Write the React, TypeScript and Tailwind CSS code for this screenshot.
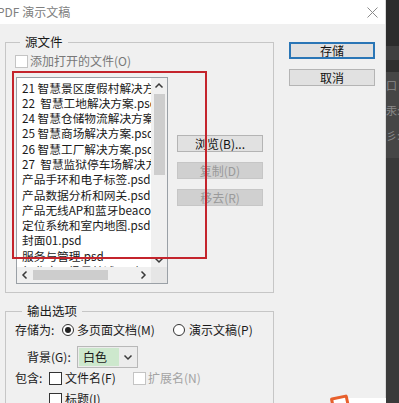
import React from "react";

// "PDF 演示文稿" dialog (Photoshop scripts) — source files list + output options.

const files = [
  "21 智慧景区度假村解决方案.psd",
  "22  智慧工地解决方案.psd",
  "24 智慧仓储物流解决方案.psd",
  "25 智慧商场解决方案.psd",
  "26 智慧工厂解决方案.psd",
  "27  智慧监狱停车场解决方案.psd",
  "产品手环和电子标签.psd",
  "产品数据分析和网关.psd",
  "产品无线AP和蓝牙beacon.psd",
  "定位系统和室内地图.psd",
  "封面01.psd",
  "服务与管理.psd",
  "行业应用场景综述.psd",
];

function Chevron({ dir }: { dir: "up" | "down" | "left" | "right" }) {
  const d = {
    up: "M1.5 6.5 L5 3 L8.5 6.5",
    down: "M1.5 3.5 L5 7 L8.5 3.5",
    left: "M6.5 1.5 L3 5 L6.5 8.5",
    right: "M3.5 1.5 L7 5 L3.5 8.5",
  }[dir];
  return (
    <svg width="10" height="10" viewBox="0 0 10 10" fill="none">
      <path d={d} stroke="#3a3a3a" strokeWidth="1.5" />
    </svg>
  );
}

function Checkbox({ disabled }: { disabled?: boolean }) {
  return (
    <span
      className={
        "w-[13px] h-[13px] shrink-0 border bg-white " +
        (disabled ? "border-[#c4c4c4]" : "border-[#333333]")
      }
    />
  );
}

function Radio({ checked }: { checked?: boolean }) {
  return (
    <span className="w-[12px] h-[12px] shrink-0 rounded-full border border-[#333333] bg-white flex items-center justify-center">
      {checked && <span className="w-[6px] h-[6px] rounded-full bg-[#222222]" />}
    </span>
  );
}

function Button({
  children,
  disabled,
  focused,
  className = "",
}: {
  children: React.ReactNode;
  disabled?: boolean;
  focused?: boolean;
  className?: string;
}) {
  return (
    <div
      className={
        "w-[86px] h-[17px] flex items-center justify-center text-[12px] leading-none " +
        (focused
          ? "border-2 border-[#2a76b6] bg-[#e1e1e1] text-[#111111] "
          : disabled
            ? "border border-[#c6c6c6] bg-[#d0d0d0] text-[#9a9a9a] "
            : "border border-[#b4b4b4] bg-[#e1e1e1] text-[#111111] ") +
        className
      }
    >
      {children}
    </div>
  );
}

export default function App() {
  return (
    <div className="relative w-[399px] h-[403px] overflow-hidden flex font-['Noto_Sans_CJK_SC',sans-serif] text-[#1a1a1a]">
      {/* dialog */}
      <div className="w-[386px] h-full flex flex-col bg-[#f0f0f0] border-r border-[#d8d8d8]">
        {/* title bar */}
        <div className="h-[24px] shrink-0 bg-white flex items-center justify-between">
          <span className="ml-[-3px] text-[12px] text-[#808080]">PDF 演示文稿</span>
          <svg width="11" height="11" viewBox="0 0 11 11" className="mr-[7px]">
            <path d="M0.5 0.5 L10.5 10.5 M10.5 0.5 L0.5 10.5" stroke="#8a8a8a" strokeWidth="1" />
          </svg>
        </div>

        <div className="flex">
          {/* left column: group boxes */}
          <div className="pl-[5px] w-[274px] shrink-0">
            <fieldset className="mt-[9px] border border-[#c6c6c6] pb-[8px]">
              <legend className="ml-[14px] px-[5px] text-[12.5px] leading-[18px] text-[#1a1a1a]">
                源文件
              </legend>
              <div className="mt-[3px] h-[14px] pl-[9px] flex items-center">
                <Checkbox disabled />
                <span className="ml-[2px] text-[12px] leading-none text-[#787878]">
                  添加打开的文件(O)
                </span>
              </div>

              <div className="mt-[9px] pl-[10px] flex">
                {/* list box */}
                <div className="w-[152px] h-[207px] border border-[#9aa0a6] bg-white flex flex-col">
                  <div className="flex-1 flex min-h-0">
                    <div className="flex-1 overflow-hidden pt-[1.5px] pl-[5px]">
                      {files.map((f) => (
                        <div
                          key={f}
                          className="whitespace-pre text-[11.7px] leading-[15.3px] text-[#1a1a1a]"
                        >
                          {f}
                        </div>
                      ))}
                    </div>
                    <div className="w-[16px] bg-[#f0f0f0] flex flex-col items-center">
                      <div className="h-[16px] flex items-center justify-center">
                        <Chevron dir="up" />
                      </div>
                      <div className="w-[11px] h-[81px] bg-[#cdcdcd]" />
                      <div className="flex-1" />
                      <div className="h-[14px] flex items-center justify-center">
                        <Chevron dir="down" />
                      </div>
                    </div>
                  </div>
                  <div className="h-[16px] shrink-0 flex bg-[#f0f0f0]">
                    <div className="w-[16px] flex items-center justify-center">
                      <Chevron dir="left" />
                    </div>
                    <div className="flex-1 flex items-center">
                      <div className="w-[75px] h-[10px] bg-[#cdcdcd]" />
                    </div>
                    <div className="w-[16px] flex items-center justify-center">
                      <Chevron dir="right" />
                    </div>
                    <div className="w-[16px] bg-[#e6e6e6]" />
                  </div>
                </div>

                {/* side buttons */}
                <div className="ml-[9px] mt-[58px] flex flex-col gap-[10px]">
                  <Button>浏览(B)...</Button>
                  <Button disabled>复制(D)</Button>
                  <Button disabled>移去(R)</Button>
                </div>
              </div>
            </fieldset>

            <fieldset className="mt-[9px] h-[130px] border border-[#c6c6c6]">
              <legend className="ml-[16px] px-[5px] text-[12.5px] leading-[18px] text-[#1a1a1a]">
                输出选项
              </legend>
              <div className="mt-[1px] h-[18px] pl-[9px] flex items-center text-[12px] leading-none">
                <span className="w-[47px]">存储为:</span>
                <div className="w-[111px] flex items-center">
                  <Radio checked />
                  <span className="ml-[3px]">多页面文档(M)</span>
                </div>
                <Radio />
                <span className="ml-[4px]">演示文稿(P)</span>
              </div>
              <div className="mt-[7px] h-[22px] pl-[21px] flex items-center text-[12px] leading-none">
                <span className="w-[50px]">背景(G):</span>
                <div className="w-[61px] h-[22px] border border-[#b8b8b8] bg-[#ececec] flex items-center">
                  <span className="ml-[1px] w-[40px] h-[18px] bg-[#cde8cd] flex items-center pl-[4px]">
                    白色
                  </span>
                  <span className="ml-[4px]">
                    <Chevron dir="down" />
                  </span>
                </div>
              </div>
              <div className="mt-[2px] h-[16px] pl-[9px] flex items-center text-[12px] leading-none">
                <span className="w-[34px]">包含:</span>
                <div className="w-[84px] flex items-center">
                  <Checkbox />
                  <span className="ml-[3px]">文件名(F)</span>
                </div>
                <Checkbox disabled />
                <span className="ml-[2px] text-[#a3a3a3]">扩展名(N)</span>
              </div>
              <div className="mt-[5px] h-[16px] pl-[43px] flex items-center text-[12px] leading-none">
                <Checkbox />
                <span className="ml-[3px]">标题(I)</span>
              </div>
            </fieldset>
          </div>

          {/* right column: dialog buttons */}
          <div className="ml-[15px] pt-[18px] flex flex-col gap-[10px]">
            <Button focused>存储</Button>
            <Button>取消</Button>
          </div>
        </div>
      </div>

      {/* photoshop panels behind the dialog */}
      <div className="w-[13px] h-full flex flex-col bg-[#3b3b3b] text-[11px] leading-none text-[#8a8a8a] overflow-hidden">
        <div className="h-[46px] bg-[#2c2c2c]" />
        <div className="h-[14px] bg-[#404040]" />
        <div className="h-[12px] bg-[#2f2f2f]" />
        <div className="h-[86px] bg-[#464646] pt-[8px] flex flex-col gap-[14px]">
          <span>口</span>
          <span>汞:</span>
          <span>彡:</span>
        </div>
        <div className="flex-1 bg-[#3a3a3a]" />
      </div>

      {/* red annotation frame */}
      <div className="absolute left-[12px] top-[71px] w-[195px] h-[188px] border-2 border-[#c4242c]" />

      {/* desktop edge at the bottom right */}
      <div className="absolute left-[334px] top-[398px] w-[52px] h-[5px] bg-white" />
      <div className="absolute left-[331px] top-[396px] w-[18px] h-[14px] rotate-[-12deg] border-[3px] border-[#e8602c] rounded-[2px]" />
    </div>
  );
}
